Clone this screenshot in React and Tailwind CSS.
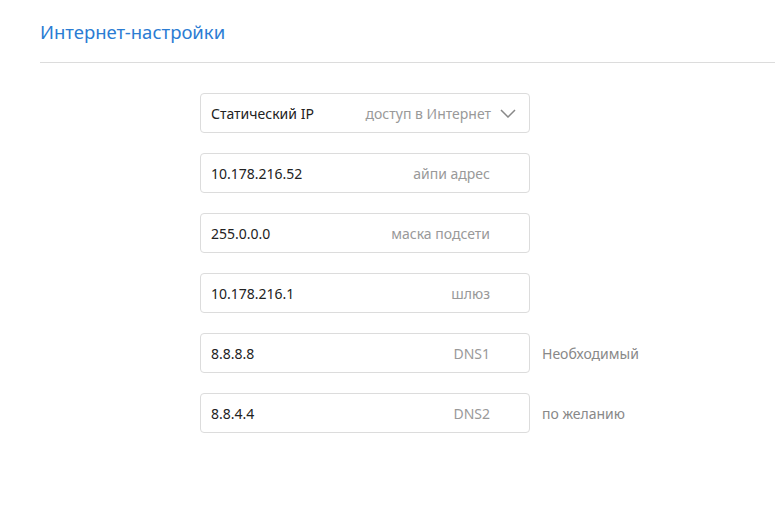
const fields = [
    { value: '10.178.216.52', label: 'айпи адрес' },
    { value: '255.0.0.0', label: 'маска подсети' },
    { value: '10.178.216.1', label: 'шлюз' },
    { value: '8.8.8.8', label: 'DNS1', note: 'Необходимый' },
    { value: '8.8.4.4', label: 'DNS2', note: 'по желанию' },
];

const App = () => {
    return (
        <div className="w-[775px] h-[508px] bg-white font-['Noto_Sans',sans-serif]">
            <div className="pl-10 pt-[19px]">
                <h1 className="text-[18.5px] leading-[26px] text-[#2b7cd3] font-normal">Интернет-настройки</h1>
                <div className="mt-[17px] h-px bg-[#dcdcdc]"></div>
            </div>
            <div className="pl-[200px] pt-[30px] flex flex-col gap-5">
                <div className="flex items-center">
                    <div className="w-[330px] h-10 border border-[#dcdcdc] rounded-[4px] flex items-center pl-[10px] pr-[13px] text-[14px]">
                        <span className="text-[#222]">Статический IP</span>
                        <span className="ml-auto text-[#999]">доступ в Интернет</span>
                        {/* thin wide chevron */}
                        <svg width="16" height="9" viewBox="0 0 16 9" className="ml-[9px] text-[#888]">
                            <path d="M1 1l7 7 7-7" fill="none" stroke="currentColor" strokeWidth="1.5" />
                        </svg>
                    </div>
                </div>
                {fields.map((f, i) => (
                    <div key={i} className="flex items-center">
                        <div className="w-[330px] h-10 border border-[#dcdcdc] rounded-[4px] flex items-center pl-[10px] pr-[39px] text-[14px]">
                            <span className="text-[#222]">{f.value}</span>
                            <span className="ml-auto text-[#999]">{f.label}</span>
                        </div>
                        {f.note && <span className="ml-[12px] text-[14px] text-[#888]">{f.note}</span>}
                    </div>
                ))}
            </div>
        </div>
    );
};

export default App;
